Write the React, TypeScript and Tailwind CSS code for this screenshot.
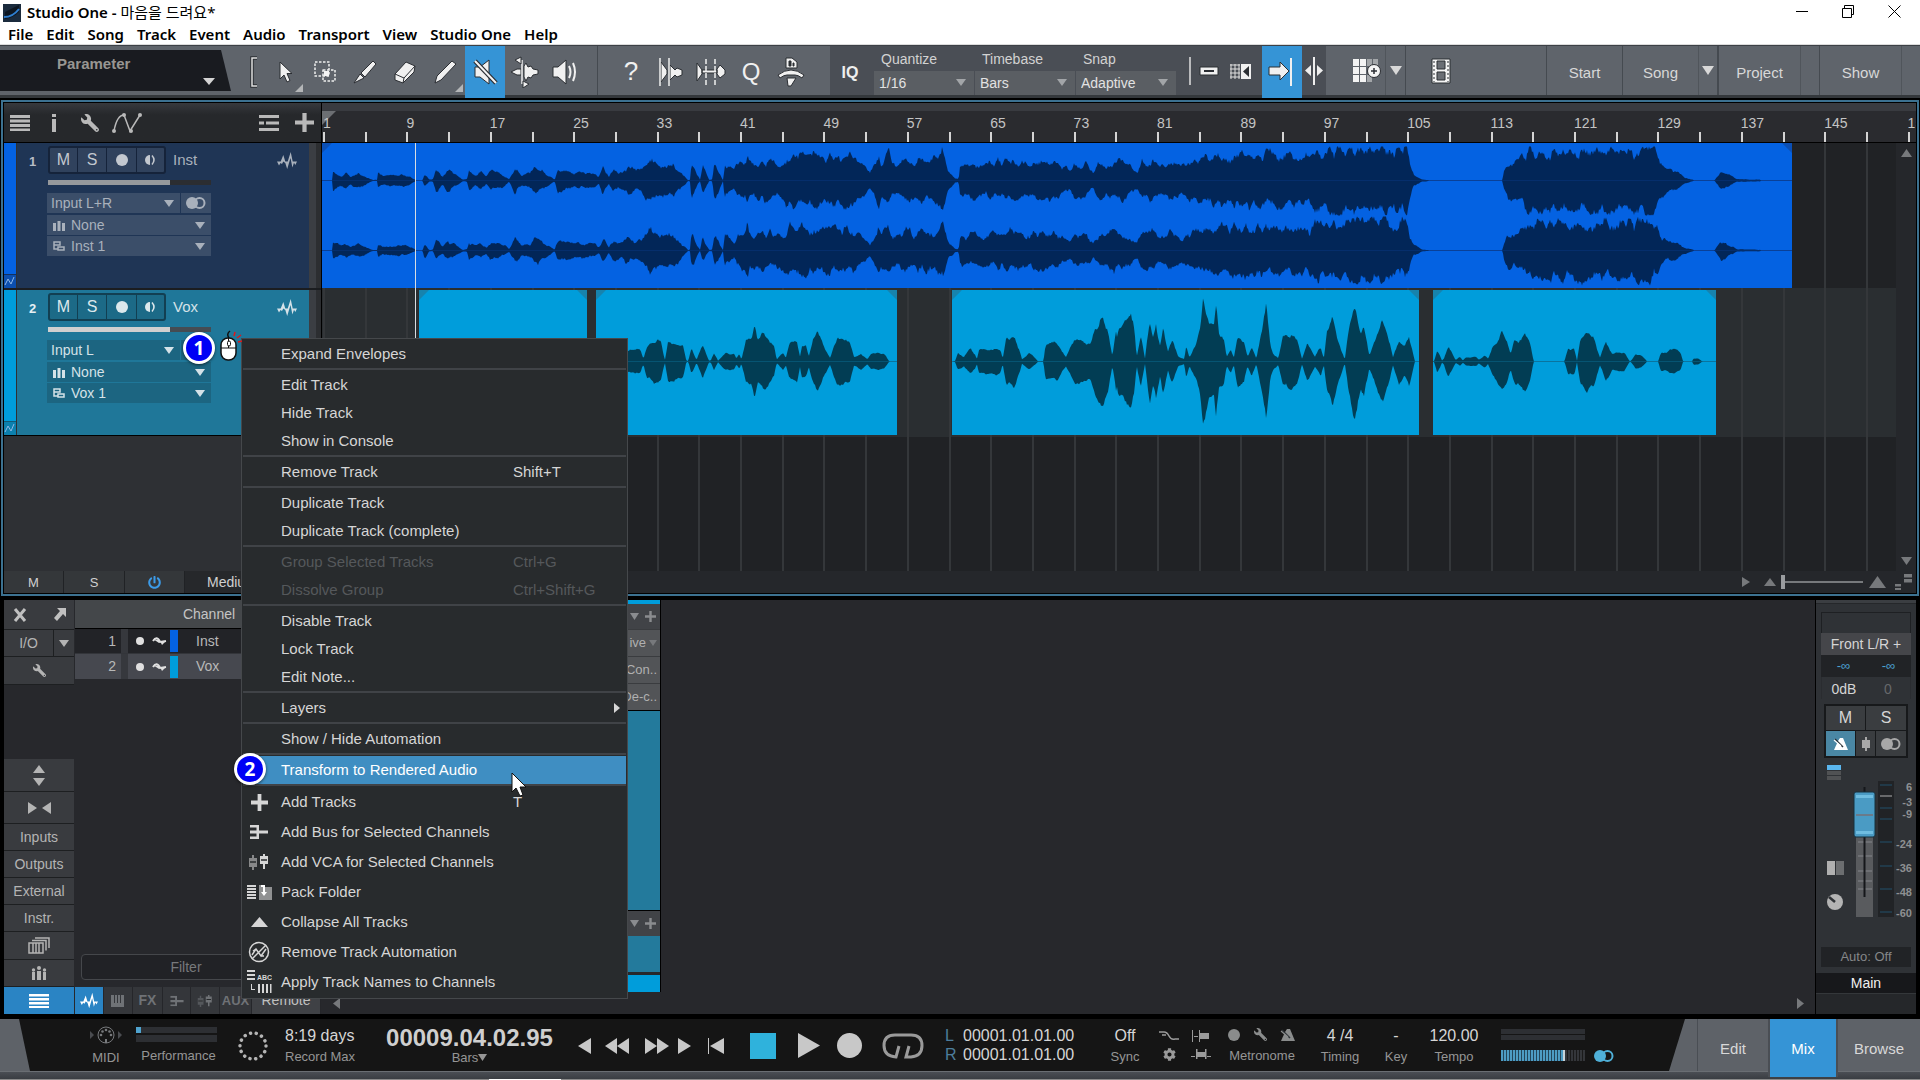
import React from "react";
import { FaWrench, FaCog, FaPowerOff } from "react-icons/fa";

type Pt = [number, number];

/* ---------- waveform data ---------- */

const stretch = (origin: number, unit: number, pts: Pt[]): Pt[] =>
  pts.map(([x, a]) => [x / unit + origin, a / 3]);
const partA = (pts: Pt[]) => stretch(-2, 1.96, pts);
const partB = (pts: Pt[]) => stretch(778, 1.912, pts);

const instEnvelope: Pt[] = [
  ...partA([
    [0, 0], [24, 0], [25, 32], [40, 17], [52, 28], [60, 14], [75, 28], [90, 14], [103, 2], [112, 2], [114, 26], [125, 16], [150, 19],
    [165, 20], [185, 5], [189, 0], [201, 0], [205, 28], [214, 3], [221, 3], [228, 38], [240, 14], [250, 36], [268, 18], [280, 3], [288, 5],
    [292, 30], [305, 16], [315, 30], [326, 12], [335, 32], [360, 20], [371, 5], [382, 46], [395, 16], [410, 26], [425, 46], [445, 20],
    [460, 2], [466, 36], [490, 25], [540, 24], [546, 10], [555, 50], [566, 10], [575, 38], [592, 26], [605, 50], [620, 30], [630, 46],
    [648, 78], [665, 52], [692, 60], [715, 15], [722, 1], [725, 1], [728, 58], [745, 2], [750, 48], [763, 1], [769, 4], [773, 64],
    [790, 2], [793, 62], [812, 32], [818, 60], [834, 64], [838, 98], [842, 60], [850, 56], [870, 68], [900, 56], [920, 84], [953, 86], [990, 80], [1045, 80],
    [1070, 38], [1078, 24], [1090, 60], [1095, 92], [1100, 50], [1115, 96], [1121, 58], [1135, 60], [1150, 76], [1165, 55], [1175, 70], [1205, 76],
    [1220, 106], [1230, 36], [1245, 6], [1252, 6], [1254, 48], [1280, 60], [1300, 52], [1350, 70], [1380, 62], [1440, 60], [1470, 36],
    [1480, 55], [1500, 55], [1515, 28], [1525, 55], [1555, 62],
  ]),
  ...partB([
    [0, 76], [40, 66], [60, 44], [70, 30], [80, 60], [100, 72], [115, 48], [135, 68], [155, 42], [165, 66], [200, 72], [240, 84],
    [290, 92], [330, 88], [400, 78], [415, 104], [450, 100], [520, 104], [587, 104], [592, 52], [600, 22], [615, 4], [627, 2], [628, 0],
    [770, 0], [771, 25], [780, 56], [800, 66], [820, 100], [900, 102], [980, 104], [1060, 102], [1070, 62], [1085, 36], [1100, 32], [1115, 13],
    [1134, 3], [1135, 0], [1175, 0], [1188, 36], [1205, 18], [1218, 4], [1262, 3], [1264, 0], [1323, 0],
  ]),
];

const voxEnvelopes: Pt[][] = [
  [],
  partA([
    [600, 30], [615, 38], [628, 35], [634, 8], [640, 45], [655, 62], [668, 58], [676, 4], [682, 62], [700, 52], [712, 46], [718, 2],
    [722, 2], [728, 38], [738, 5], [750, 48], [762, 3], [766, 3], [772, 28], [780, 2], [795, 26], [812, 22], [816, 8], [822, 22], [826, 6],
    [835, 62], [846, 65], [852, 105], [858, 60], [870, 85], [890, 45], [895, 5], [908, 28], [913, 12], [920, 55], [935, 62], [941, 14],
    [944, 46], [953, 46], [958, 14], [966, 65], [975, 98], [986, 50], [1000, 10], [1005, 35], [1015, 72], [1038, 60], [1047, 12],
    [1060, 24], [1073, 8], [1080, 24], [1105, 24], [1115, 2], [1117, 0], [1130, 0],
  ]),
  partA([
    [1240, 0], [1245, 2], [1250, 26], [1262, 14], [1275, 38], [1285, 20], [1287, 4], [1292, 36], [1310, 36], [1325, 42], [1334, 34], [1338, 8],
    [1345, 68], [1362, 74], [1372, 30], [1376, 6], [1390, 26], [1405, 5], [1406, 1], [1418, 1], [1422, 52], [1445, 56], [1462, 14],
    [1480, 68], [1510, 56], [1520, 95], [1532, 128], [1545, 90], [1553, 14], [1562, 105],
  ]).concat(
    partB([
      [2, 115], [8, 70], [15, 90], [25, 5], [35, 100], [45, 110], [58, 150], [66, 90], [70, 12], [78, 80], [86, 8], [95, 125], [102, 70],
      [107, 118], [115, 45], [121, 100], [130, 28], [138, 60], [150, 15], [161, 8], [165, 50], [171, 12], [185, 60], [192, 100], [197, 182],
      [208, 112], [218, 105], [222, 172], [228, 80], [237, 70], [242, 14], [250, 34], [256, 12], [263, 74], [275, 66], [282, 15], [290, 45], [299, 8],
      [308, 80], [318, 172], [326, 45], [332, 22], [341, 10], [350, 72], [364, 80], [378, 65], [386, 8], [397, 58], [411, 16], [422, 44], [428, 10],
      [434, 90], [444, 135], [453, 75], [468, 6], [475, 90], [487, 175], [498, 80], [505, 105], [515, 20], [528, 70], [540, 130], [555, 50],
      [560, 12], [572, 68], [582, 45], [591, 70], [599, 20], [602, 0], [611, 0],
    ]),
  ),
  partB([
    [636, 0], [639, 2], [645, 36], [654, 3], [658, 10], [666, 48], [680, 4], [688, 14], [694, 4], [700, 13], [720, 13], [724, 5], [735, 18],
    [742, 8], [750, 40], [760, 60], [768, 90], [776, 76], [785, 24], [793, 66], [800, 60], [813, 92], [822, 62], [829, 2], [830, 0],
    [888, 0], [895, 40], [907, 36], [912, 2], [918, 60], [933, 92], [945, 66], [956, 12], [967, 60], [980, 22], [988, 28], [1003, 28],
    [1012, 2], [1014, 0], [1017, 6], [1024, 22], [1036, 18], [1045, 2], [1046, 0], [1067, 0], [1072, 26], [1085, 30], [1098, 38],
    [1110, 26], [1115, 0], [1132, 0], [1135, 10], [1144, 9], [1151, 1], [1153, 0], [1177, 0],
  ]),
];

const noise = (n: number) => {
  const v = Math.sin(n * 127.1 + 11.7) * 43758.5453;
  return v - Math.floor(v);
};

function ampAt(pts: Pt[], x: number) {
  if (!pts.length || x < pts[0][0] || x > pts[pts.length - 1][0]) return 0;
  for (let i = 1; i < pts.length; i++) {
    if (x <= pts[i][0]) {
      const [x0, a0] = pts[i - 1];
      const [x1, a1] = pts[i];
      return x1 === x0 ? a1 : a0 + ((a1 - a0) * (x - x0)) / (x1 - x0);
    }
  }
  return 0;
}

/* Jagged peaks: every few pixels a new spike height, with valleys in between. */
function spike(x: number, seed: number) {
  const cell = Math.floor(x / 4);
  const phase = (x % 4) / 4;
  const a = noise(cell + seed);
  const b = noise(cell + 1 + seed);
  return 0.7 * (a + (b - a) * phase) + 0.3 * noise(x * 1.3 + seed);
}

function wavePath(pts: Pt[], from: number, to: number, cy: number, rough: number, seed: number, gain = 1) {
  const top: string[] = [];
  const bottom: string[] = [];
  for (let x = from; x <= to; x++) {
    const a = ampAt(pts, x) * gain;
    const up = Math.min(34 + 30 * Number(cy > 60 && cy < 80), a * (1 - rough * spike(x, seed)));
    const down = Math.min(35 + 32 * Number(cy > 60 && cy < 80), a * (1 - rough * spike(x, seed + 400)));
    top.push(`${x - from} ${(cy - up).toFixed(1)}`);
    bottom.unshift(`${x - from} ${(cy + down).toFixed(1)}`);
  }
  return `M${top.join("L")}L${bottom.join("L")}Z`;
}

const LANE_W = 1574;
const laneX = (px: number) => `${(px / LANE_W) * 100}%`;
const BAR8 = 83.4;

/* ---------- small shared pieces ---------- */

const Tri = ({ dir = "down", className = "", label }: { dir?: "up" | "down" | "left" | "right"; className?: string; label?: string }) => {
  const pts = { down: "0,0 10,0 5,10", up: "0,10 10,10 5,0", left: "10,0 10,10 0,5", right: "0,0 0,10 10,5" }[dir];
  return (
    <svg viewBox="0 0 10 10" preserveAspectRatio="none" fill="currentColor" className={`shrink-0 ${className}`} aria-label={label}>
      <polygon points={pts} />
    </svg>
  );
};

const Svg = ({ w, h, children, className = "" }: { w: number; h: number; children: React.ReactNode; className?: string }) => (
  <svg width={w} height={h} viewBox={`0 0 ${w} ${h}`} fill="currentColor" className={`shrink-0 ${className}`}>
    {children}
  </svg>
);

const Stereo = ({ className = "" }: { className?: string }) => (
  <Svg w={22} h={14} className={className}>
    <circle cx="7" cy="7" r="6" />
    <circle cx="14.5" cy="7" r="5" fill="none" stroke="currentColor" strokeWidth="2" />
  </Svg>
);

const WaveIcon = ({ className = "" }: { className?: string }) => (
  <Svg w={20} h={17} className={className}>
    <path d="M0 9.500h3.700L6.300 3l2 6.500h2.400L13.700 0l2 9.500H20L18.300 13 17 10.800 15.400 15.500 13.500 6l-3.300 11-1.900-6L6.300 9.600 5 12 3.500 11 2 13.500z" />
  </Svg>
);

const Plus = ({ size = 18, className = "" }: { size?: number; className?: string }) => (
  <svg width={size} height={size} viewBox="0 0 18 18" fill="currentColor" className={`shrink-0 ${className}`}>
    <path d="M7 0h4v7h7v4h-7v7H7v-7H0V7h7z" />
  </svg>
);

const Bus = ({ className = "" }: { className?: string }) => (
  <Svg w={18} h={14} className={className}>
    <path d="M0 0h9v5.500h9v3H9V14H0v-2.500h6.500v-3H0v-3h6.500v-3H0z" />
  </Svg>
);

const Faders = ({ className = "" }: { className?: string }) => (
  <Svg w={20} h={16} className={className}>
    <path d="M3 1h2v3h3v9H5v3H3v-3H0V4h3z" opacity=".55" />
    <path d="M14 0h2v2h3v8h-3v5h-2v-5h-3V2h3z" />
    <path d="M1 8h6M12 6h6" stroke="#282b2d" strokeWidth="1.500" />
  </Svg>
);

const Metro = ({ className = "" }: { className?: string }) => (
  <Svg w={16} h={14} className={className}>
    <path d="M7 1h3l5 12H1l4-9z" />
    <path d="M2 2l8 8" stroke="#2b3035" strokeWidth="1.500" />
    <path d="M1 3l7 6" stroke="currentColor" strokeWidth="1.200" />
  </Svg>
);

const People = ({ className = "" }: { className?: string }) => (
  <Svg w={16} h={14} className={className}>
    <path d="M1 6h3v8H1zM6 5h4v9H6zM12 6h3v8h-3z" />
    <circle cx="2.500" cy="4" r="1.700" />
    <circle cx="8" cy="2" r="2" />
    <circle cx="13.500" cy="4" r="1.700" />
  </Svg>
);

/* ---------- title, menus, tool bar ---------- */

function TitleBar() {
  return (
    <header className="shrink-0 bg-white text-black [font-family:'Noto_Sans','Noto_Sans_CJK_KR',sans-serif]">
      <div className="flex h-[22px] items-center">
        <svg width="18" height="18" viewBox="0 0 18 18" className="ml-[3px] mt-1">
          <rect width="18" height="18" fill="#1b2b3d" />
          <path d="M2 8q8-4 14-7v7q-6 6-14 7z" fill="#0e1722" />
          <path d="M1 13q9 0 15-8" stroke="#2f7fd0" strokeWidth="2" fill="none" />
        </svg>
        <span className="ml-[6px] mt-px text-[15px] leading-5 font-semibold">
          Studio One - <span className="font-normal">마음을 드려요*</span>
        </span>
        <div className="ml-auto flex items-center">
          <button aria-label="Minimize" className="flex w-[46px] justify-center">
            <Svg w={12} h={12}><rect y="6" width="12" height="1" /></Svg>
          </button>
          <button aria-label="Restore" className="flex w-[46px] justify-center">
            <svg width="13" height="13" viewBox="0 0 13 13" fill="none" stroke="black">
              <path d="M.5 3.500h9v9h-9zM2.500 3.500v-3h9v9h-2" />
            </svg>
          </button>
          <button aria-label="Close" className="mr-[3px] flex w-[46px] justify-center">
            <svg width="13" height="13" viewBox="0 0 13 13" stroke="black"><path d="M.5.5l12 12M12.500.5l-12 12" /></svg>
          </button>
        </div>
      </div>
      <nav className="flex h-[23px] items-center gap-[13px] border-b border-[#dcdcdc] pt-[2px] pl-2 text-[15px] leading-5 font-semibold">
        {["File", "Edit", "Song", "Track", "Event", "Audio", "Transport", "View", "Studio One", "Help"].map((m) => (
          <button key={m}>{m}</button>
        ))}
      </nav>
    </header>
  );
}

const toolIcons: Record<string, React.ReactNode> = {
  Arrow: <path d="M11 6v17l4-4 3 7 3-1.500-3-7h5z" />,
  Range: (
    <g fill="none" stroke="#f0f0f0" strokeWidth="1.500" strokeDasharray="2.500 1.500">
      <path d="M6 6h14v14H6zM14 14h12v11H14z" />
      <path d="M15 15h5v5h-5z" fill="#f4f4f4" stroke="none" />
    </g>
  ),
  Split: <path d="M5 27l6-9 4 4zM12 17L24 5l3 3-11 13z" />,
  Eraser: (
    <>
      <path d="M6 18L17 6l9 4-1 6-11 11-8-3z" />
      <path d="M6 18l9 4 11-12M15 22l-1 5" fill="none" />
    </>
  ),
  Paint: <path d="M6 27l2-7L23 5l4 3-15 16z" />,
  Mute: (
    <>
      <path d="M6 11h5l9-7v24l-9-7H6z" />
      <path d="M6 5l21 22" stroke="#2b2e33" strokeWidth="4.500" />
      <path d="M6 5l21 22" stroke="#f4f4f4" strokeWidth="2" />
    </>
  ),
  Bend: (
    <>
      <path d="M2 16l6-3h4v6H8zM15 10l2-3 2 4 3-1 2 3 5 1v4l-5 1-2 3-3-1-2 4-2-4z" />
      <path d="M13 4v24" stroke="#f0f0f0" strokeWidth="1.500" />
      <path d="M6 4l6-3v7zM20 28l-6-3v7z" />
    </>
  ),
  Listen: (
    <>
      <path d="M4 11h5l8-7v24l-8-7H4z" />
      <path d="M20 10q3 6 0 12M24 7q4 9 0 18" fill="none" stroke="#f0f0f0" strokeWidth="2" />
    </>
  ),
};

const extraIcons: Record<string, React.ReactNode> = {
  Transients: (
    <>
      <path d="M6 6l6 8v4l-6 8zM15 9l5 5 2-2 5 2v5l-5 2-2-2-5 5z" />
      <path d="M5 2v28M14 2v28" stroke="#f0f0f0" strokeWidth="1.500" />
    </>
  ),
  Loop: (
    <>
      <path d="M2 7l5 7v4l-5 7zM7 14h15v3H7zM22 13l3-4 5 5v4l-5 4-3-4z" />
      <path d="M11 3v26M20 3v26" stroke="#f0f0f0" strokeWidth="1.500" strokeDasharray="5 2" />
    </>
  ),
};

const ToolGlyph = ({ children }: { children: React.ReactNode }) => (
  <svg width="32" height="32" viewBox="0 0 32 32" fill="#f0f0f0" stroke="#2b2e33" strokeWidth="1" strokeLinejoin="round" className="mt-[2px]">
    {children}
  </svg>
);

function ToolSelect({ label, value }: { label: string; value: string }) {
  return (
    <div className="flex w-[101px] flex-col">
      <label htmlFor={label} className="h-[25px] pl-[7px] text-[14px] leading-[27px] text-[#d2d2d2]">{label}</label>
      <div className="relative mr-px">
        <select id={label} defaultValue={value} className="h-6 w-full appearance-none bg-[#5a5e63] pl-[5px] text-[14px] leading-6 text-[#e2e2e2]">
          <option>{value}</option>
        </select>
        <Tri className="pointer-events-none absolute top-2 right-2 h-[7px] w-[10px] text-[#a2a5a8]" />
      </div>
    </div>
  );
}

function ToolBar() {
  return (
    <div className="flex h-[53px] shrink-0 border-t border-b-[3px] border-t-[#3c4046] border-b-[#34383c] bg-[#5f646b] text-[15px] text-[#d8d8d8]">
      <div className="flex w-[232px] shrink-0 flex-col bg-[#191b20] [clip-path:polygon(0_4px,221px_4px,231px_45px,0_45px)]">
        <span className="mt-[10px] pl-[57px] text-[15px] leading-4 font-bold text-[#989692]">Parameter</span>
        <Tri className="mt-[6px] ml-[203px] h-[7px] w-3 text-[#d4d4d4]" />
      </div>
      <Svg w={33} h={49}>
        <path d="M25 12h-5v28h5" fill="none" stroke="#2b2e33" strokeWidth="3.500" />
        <path d="M25 12h-5v28h5" fill="none" stroke="#e0e0e0" strokeWidth="1.500" />
      </Svg>
      {Object.keys(toolIcons).map((k) => (
        <button key={k} aria-label={k} className={`relative flex w-10 shrink-0 items-center justify-center ${k === "Mute" ? "-mb-[3px] bg-[#3594d6] pb-[3px]" : ""}`}>
          <ToolGlyph>{toolIcons[k]}</ToolGlyph>
          {(k === "Arrow" || k === "Paint") && (
            <svg width="8" height="8" className="absolute right-[2px] bottom-[3px]"><path d="M8 0v8H0z" fill="#b4b6b8" /></svg>
          )}
        </button>
      ))}
      <div className="ml-3 w-px bg-[#454a50]" />
      <div className="flex w-[232px] shrink-0 items-center pl-[13px]">
        <button className="w-10 pt-[2px] text-[26px] text-[#f0f0f0]">?</button>
        {Object.keys(extraIcons).map((k) => (
          <button key={k} aria-label={k} className="flex w-10 justify-center"><ToolGlyph>{extraIcons[k]}</ToolGlyph></button>
        ))}
        <button className="w-10 pt-[2px] text-[24px] text-[#f0f0f0]">Q</button>
        <button aria-label="Quantize panel" className="flex w-10 justify-center">
          <ToolGlyph>
            <path d="M11 2h6l5 4v6H11zM3 19q13-10 26 0l-2 3q-4-3-7-3h-8q-3 0-7 3zM12 22h9l-5 8h-3z" />
            <path d="M14 5v5h2V5zM18 7v3h1V7z" fill="#2b2e33" />
          </ToolGlyph>
        </button>
      </div>
      <div className="flex w-[496px] shrink-0 bg-[#4a4e55]">
        <button className="w-[44px] pt-1 pr-1 text-[16px] font-bold text-[#eee]">IQ</button>
        <ToolSelect label="Quantize" value="1/16" />
        <ToolSelect label="Timebase" value="Bars" />
        <ToolSelect label="Snap" value="Adaptive" />
        <Svg w={85} h={49}>
          <path d="M13 11v28" stroke="#e0e0e0" strokeWidth="1.500" />
          <path d="M23 21h18v8H23z" fill="#f0f0f0" stroke="#2b2e33" />
          <path d="M27 24h10v2H27z" fill="#2b2e33" />
          <path d="M53 19h10M53 23h10M53 27h10M53 31h10M54 18v15M58 18v15M62 18v15" stroke="#e0e0e0" />
          <path d="M64 18h10v15H64z" fill="#f0f0f0" />
          <path d="M72 20v11l-6-5.500z" fill="#2b2e33" />
        </Svg>
        <button aria-label="Snap to end" className="-mb-[3px] flex w-10 items-center justify-center bg-[#3594d6] pb-[3px]">
          <ToolGlyph>
            <path d="M3 11h11V6l9 9-9 9v-5H3z" />
            <path d="M25 2v28" stroke="#f0f0f0" strokeWidth="2" />
          </ToolGlyph>
        </button>
        <Svg w={24} h={49} className="text-[#eee]">
          <path d="M12 11v28" stroke="currentColor" strokeWidth="2" />
          <path d="M9 19v11l-6-5.500zM15 19v11l6-5.500z" />
        </Svg>
      </div>
      <button aria-label="Grid" className="flex w-[60px] items-center border-r border-[#50555b] pl-[26px]">
        <Svg w={30} h={26}>
          <path d="M1 1h6v7H1zM8 1h6v7H8zM1 9h6v7H1zM8 9h6v7H8zM1 17h6v7H1zM8 17h6v7H8z" fill="#f4f4f4" />
          <path d="M15 1h5v7h-5zM21 1h5v7h-5zM15 17h5v7h-5z" fill="#a3a6a9" />
          <circle cx="22" cy="13" r="6.500" fill="#f4f4f4" stroke="#2b2e33" />
          <path d="M22 10v6M19 13h6" stroke="#2b2e33" strokeWidth="1.500" />
        </Svg>
      </button>
      <button aria-label="Grid options" className="flex w-5 items-center justify-center border-r border-[#454a50]"><Tri className="h-[9px] w-3" /></button>
      <div className="flex flex-1 items-center border-r border-[#454a50] pl-[25px]">
        <button aria-label="Video">
          <Svg w={20} h={26}>
            <path d="M1 1h18v24H1z" fill="#f4f4f4" stroke="#2b2e33" />
            <path d="M6 3h8v8H6zM6 14h8v8H6z" fill="#6a6e74" stroke="#2b2e33" />
            <path d="M3 3v21M17 3v21" stroke="#2b2e33" strokeDasharray="2 2" />
          </Svg>
        </button>
      </div>
      <button className="w-[76px] border-r border-[#454a50] pt-[5px]">Start</button>
      <button className="w-[76px] border-r border-[#50555b] pt-[5px]">Song</button>
      <button aria-label="Songs" className="flex w-5 items-center justify-center border-r-2 border-[#454a50]"><Tri className="h-[9px] w-3" /></button>
      <button className="w-[82px] border-r border-[#50555b] pt-[5px]">Project</button>
      <div className="w-[19px] border-r border-[#454a50]" />
      <button className="w-[82px] border-r border-[#50555b] pt-[5px]">Show</button>
      <div className="w-[18px]" />
    </div>
  );
}

/* ---------- arranger ---------- */

function TrackSelect({ id, value, icon, className, dark }: { id: string; value: string; icon?: React.ReactNode; className: string; dark: boolean }) {
  return (
    <div className={`relative flex h-5 items-center ${dark ? "bg-[#3b4e69] text-[#a9b1bc]" : "bg-[#1c6581] text-[#d5e2e8]"} ${className}`}>
      {icon && <span className="pointer-events-none absolute left-[6px]">{icon}</span>}
      <select id={id} aria-label={id} defaultValue={value} className={`h-5 w-full appearance-none bg-transparent text-[14px] leading-5 ${icon ? "pl-6" : "pl-1"}`}>
        <option>{value}</option>
      </select>
      <Tri className="pointer-events-none absolute right-[6px] h-[7px] w-[10px]" />
    </div>
  );
}

function TrackHeader({ n, name, input, out, dark }: { n: number; name: string; input: string; out: string; dark: boolean }) {
  const btn = dark ? "border-[#15233a]" : "border-[#123f52]";
  const miniOut = <Svg w={12} h={11}><path d="M1 1h6v3H1zM5 6h6v3H5zM1 4v4h4" fill="none" stroke="currentColor" strokeWidth="1.500" /></Svg>;
  return (
    <div className="flex h-[145px] shrink-0">
      <div className={`flex w-3 flex-col justify-end ${dark ? "bg-[#0462e2]" : "bg-[#009ddb]"}`}>
        <div className={`h-[14px] border-t ${dark ? "border-[#12315f] bg-[#0c4fae]" : "border-[#125a78] bg-[#0c80ae]"}`}>
          <svg width="12" height="13" viewBox="0 0 12 13" fill="none" stroke="#8fb8e8"><path d="M1 10l3-6 3 5 3-7" /></svg>
        </div>
      </div>
      <div className={`ml-px flex flex-1 ${dark ? "bg-[#1f3555]" : "bg-[#1f7799]"}`}>
        <span className={`mt-[11px] w-[31px] pl-3 text-[13px] leading-4 font-bold ${dark ? "text-[#b6bcc5]" : "text-[#e6f0f4]"}`}>{n}</span>
        <div className="flex flex-1 flex-col">
          <div className="mt-[3px] flex items-center">
            <div className={`flex h-7 w-[118px] rounded-[3px] border-2 ${btn} ${dark ? "bg-[#30425d] text-[#c3c8cf]" : "bg-[#1c6a87] text-[#dce8ec]"}`}>
              <button className={`w-7 border-r text-[16px] leading-5 ${btn}`}>M</button>
              <button className={`w-[29px] border-r text-[16px] leading-5 ${btn}`}>S</button>
              <button aria-label="Record" className={`flex w-[30px] items-center justify-center border-r ${btn}`}><Svg w={12} h={12}><circle cx="6" cy="6" r="6" /></Svg></button>
              <button aria-label="Monitor" className="flex flex-1 items-center justify-center">
                <Svg w={12} h={12}><path d="M5 1v10a5 5 0 010-10z" /><path d="M7 1.500q4 4.500 0 9" fill="none" stroke="currentColor" strokeWidth="1.500" /></Svg>
              </button>
            </div>
            <span className={`ml-[7px] flex-1 pt-px text-[15px] ${dark ? "text-[#a9b1bc]" : "text-[#d5e2e8]"}`}>{name}</span>
            <WaveIcon className={`mr-3 ${dark ? "text-[#a9b1bc]" : "text-[#d5e2e8]"}`} />
          </div>
          <div className={`mt-[6px] flex h-[5px] w-[163px] ${dark ? "bg-[#2b2d31]" : "bg-[#454c53]"}`}>
            <div className={`w-3/4 ${dark ? "bg-[#96999c]" : "bg-[#d0d0d0]"}`} />
          </div>
          <div className="mt-2 -ml-px flex w-[164px] gap-px">
            <TrackSelect id={`${name} input`} value={input} className="flex-1" dark={dark} />
            <button aria-label="Stereo" className={`flex w-[30px] items-center justify-center ${dark ? "bg-[#3b4e69] text-[#a9b1bc]" : "bg-[#1c6581] text-[#d5e2e8]"}`}>
              <Stereo />
            </button>
          </div>
          <TrackSelect id={`${name} instrument`} value="None" icon={<Svg w={12} h={11}><path d="M0 3h3v8H0zM4.500 1h3v10h-3zM9 3h3v8H9z" /></Svg>} className="mt-[2px] -ml-px w-[164px]" dark={dark} />
          <TrackSelect id={`${name} channel`} value={out} icon={miniOut} className="mt-px -ml-px w-[164px]" dark={dark} />
        </div>
      </div>
      <div className="w-[7px] bg-[#3b3e43]" />
      <div className="w-[5px] bg-[#2c2e31]" />
    </div>
  );
}

function Clip({ from, to, tone, children, label }: { from: number; to: number; tone: "inst" | "vox"; children?: React.ReactNode; label: string }) {
  const corner = tone === "inst" ? "#0b4fb5" : "#1783ad";
  return (
    <div
      role="img"
      aria-label={label}
      className={`absolute inset-y-0 ${tone === "inst" ? "bg-[#0462e2]" : "bg-[#009ddb]"}`}
      style={{ left: laneX(from), width: laneX(to - from) }}
    >
      <svg viewBox={`0 0 ${to - from} 145`} preserveAspectRatio="none" className="block h-full w-full">
        {children}
        <path d={`M0 0h10L0 10zM${to - from} 0h-10l10 10z`} fill={corner} />
      </svg>
    </div>
  );
}

function GridLines() {
  return (
    <div className="absolute inset-0">
      {Array.from({ length: 38 }, (_, i) => (
        <div key={i} className="absolute inset-y-0 w-[2px] bg-[#34373a]" style={{ left: laneX(1 + (i * BAR8) / 2) }} />
      ))}
    </div>
  );
}

const voxClips: Pt[] = [[97, 265], [274, 575], [630, 1097], [1111, 1394]];

function Arranger() {
  return (
    <section className="mx-px flex h-[496px] shrink-0 border-2 border-[#3c7190]">
      <div className="flex min-w-0 flex-1 border border-black bg-black">
        <div className="mr-px flex w-[317px] shrink-0 flex-col bg-[#2e3034]">
          <div className="flex h-10 shrink-0 items-center border-b border-black bg-linear-to-b from-[#37393d] to-[#26282b] to-30% pl-[6px] text-[#b9b9b9]">
            <Svg w={20} h={16}><path d="M0 0h20v3H0zM0 4.500h20v3H0zM0 9h20v3H0zM0 13.500h20v2.500H0z" /></Svg>
            <Svg w={6} h={18} className="ml-[21px]"><path d="M1 0h4v3H1zM1 5h4v13H1z" /></Svg>
            <FaWrench size={18} className="ml-6 -scale-x-100" />
            <svg width="30" height="20" viewBox="0 0 30 20" className="ml-[13px]" fill="none" stroke="currentColor" strokeWidth="1.500">
              <path d="M2 18Q5 2 12 2l6 16L28 2" />
              <g fill="currentColor" stroke="none"><circle cx="2" cy="18" r="2" /><circle cx="12" cy="2" r="2" /><circle cx="19" cy="18" r="2" /><circle cx="28" cy="2" r="2" /></g>
            </svg>
            <Svg w={20} h={16} className="ml-auto"><path d="M0 0h20v3H0zM0 6.500h5v3H0zM7 6.500h13v3H7zM0 13h20v3H0z" /></Svg>
            <Plus size={19} className="mr-[7px] ml-4" />
          </div>
          <TrackHeader n={1} name="Inst" input="Input L+R" out="Inst 1" dark />
          <div className="h-[2px] shrink-0 bg-[#1b1d20]" />
          <TrackHeader n={2} name="Vox" input="Input L" out="Vox 1" dark={false} />
          <div className="flex-1 border-t border-black" />
          <div className="flex h-[22px] text-[14px] text-[#d0d0d0] [&>*]:border-r [&>*]:border-[#202225] [&>*]:pt-px">
            <button className="w-[60px] bg-[#34373a] text-[13px]">M</button>
            <button className="w-[61px] bg-[#34373a] text-[13px]">S</button>
            <button aria-label="Power" className="flex w-[60px] items-center justify-center bg-[#34373a] text-[#3c9be8]"><FaPowerOff size={13} /></button>
            <button className="flex-1 bg-[#26282b] pl-[22px] text-left">Medium</button>
          </div>
        </div>

        <div className="flex min-w-0 flex-1 flex-col bg-[#202225]">
          <div className="relative h-10 shrink-0 overflow-hidden border-b border-black bg-[#2a2b2f]">
            <div className="h-2 bg-[#393b40]" />
            <svg width="14" height="14" className="absolute top-2 left-0"><path d="M0 0h14L0 14z" fill="#6c6f73" /></svg>
            {Array.from({ length: 20 }, (_, i) => (
              <div key={i} className="absolute top-[11px] h-7" style={{ left: `${((1 + i * BAR8) / 1594) * 100}%`, width: `${(BAR8 / 1594) * 100}%` }}>
                <span className="block text-[14px] leading-[18px] text-[#c4c4c4]">{1 + i * 8}</span>
                <div className="flex h-[10px]">
                  <div className="flex-1 border-l-2 border-[#d4d4d4]" />
                  <div className="flex-1 border-l-2 border-[#d4d4d4]" />
                </div>
              </div>
            ))}
          </div>
          <div className="flex min-h-0 flex-1">
            <div className="relative flex min-w-0 flex-1 flex-col overflow-hidden">
              <GridLines />
              <div className="relative h-[145px] shrink-0">
                <Clip from={0} to={1470} tone="inst" label="Inst audio">
                  <path d="M0 37.500h1470M0 107.500h1470" stroke="#0a45a0" />
                  <path d={wavePath(instEnvelope, 0, 1470, 37.5, 0.52, 3, 1.14)} fill="#022658" />
                  <path d={wavePath(instEnvelope, 0, 1470, 107.5, 0.55, 77, 1.08)} fill="#022658" />
                  <path d="M0 37.500h1470M0 107.500h1470" stroke="#0a3b8a" opacity=".4" />
                </Clip>
              </div>
              <div className="relative h-[149px] shrink-0 bg-[#2a2e31] py-[2px]">
                <GridLines />
                <div className="relative h-full">
                  {voxClips.map(([a, b], i) => (
                    <Clip key={a} from={a} to={b} tone="vox" label={`Vox audio ${i + 1}`}>
                      <path d={`M0 71.500h${b - a}`} stroke="#0a7fae" />
                      {i > 0 && <path d={wavePath(voxEnvelopes[i], a, b, 71.5, 0.26, i * 31, 1.13)} fill="#023d54" />}
                      <path d={`M0 71.500h${b - a}`} stroke="#0a6b90" opacity=".5" />
                    </Clip>
                  ))}
                </div>
              </div>
              <div className="absolute inset-y-0 w-px bg-[#d8dde2]" style={{ left: laneX(93) }} />
            </div>
            <div className="flex w-5 flex-col items-center justify-between bg-[#25272b] py-[6px] text-[#77797c]">
              <Tri dir="up" className="h-2 w-[11px]" />
              <Tri className="h-2 w-[11px]" />
            </div>
          </div>
          <div className="flex h-[22px] shrink-0 items-center justify-end bg-[#25272b] pr-[3px] text-[#77797c]">
            <Tri dir="right" className="h-[10px] w-2" />
            <Tri dir="up" className="ml-[14px] h-2 w-3" />
            <input type="range" aria-label="Zoom" defaultValue={0} className="ml-[5px] h-[14px] w-[82px] appearance-none bg-[linear-gradient(#77797c,#77797c)] bg-[length:100%_2px] bg-center bg-no-repeat [&::-webkit-slider-thumb]:h-[14px] [&::-webkit-slider-thumb]:w-1 [&::-webkit-slider-thumb]:appearance-none [&::-webkit-slider-thumb]:bg-[#9a9c9f]" />
            <Tri dir="up" className="ml-[6px] h-3 w-[17px]" />
            <Svg w={18} h={16} className="ml-[9px]"><path d="M0 10h6v2.500H0zM0 14h6v2H0zM9 0h8v3.500H9zM9 5h8v3.500H9z" /></Svg>
          </div>
        </div>
      </div>
    </section>
  );
}

/* ---------- console ---------- */

const sideBtn = "flex shrink-0 items-center justify-center border-b border-[#1d1f21] bg-[#393b3f] text-[14px] text-[#b4b4b4]";

function ChannelRow({ n, name, on }: { n: number; name: string; on?: boolean }) {
  return (
    <li className={`flex h-[25px] items-center text-[14px] text-[#b8b8b8] ${on ? "bg-[#46484f]" : "border-b border-[#33353a] bg-[#222327]"}`}>
      <span className="w-[41px] text-right">{n}</span>
      <span className="mx-[5px] h-full w-[7px] bg-[#36383d]" />
      <Svg w={34} h={12} className="ml-[3px] text-[#e0e0e0]">
        <circle cx="4" cy="6" r="4" />
        <path d="M17 6q4-6 7 1l6-1" fill="none" stroke="currentColor" strokeWidth="2" />
        <path d="M17 4l6 1v3zM24 6l6 0-4 4z" />
      </Svg>
      <span className={`h-[22px] w-2 ${on ? "bg-[#009ddb]" : "bg-[#0462e2]"}`} />
      <span className="ml-[18px]">{name}</span>
    </li>
  );
}

const dbMarks: [string, string][] = [["6", "h-[15px]"], ["-3", "h-3"], ["-9", "h-[30px]"], ["-24", "h-6"], ["-36", "h-6"], ["-48", "h-[21px]"], ["-60", "h-4"]];

function MainStrip() {
  return (
    <aside className="flex w-[101px] shrink-0 flex-col border-l border-black bg-[#2f3236] text-[14px] text-[#d5d5d5]">
      <div className="h-1 border-b border-[#25272a] bg-[#3b3e42]" />
      <div className="mx-[5px] mt-2 h-[21px] border border-b-0 border-[#1e2023]" />
      <button className="mx-[5px] h-[22px] bg-[#45464a] text-[14px] leading-[22px]">Front L/R +</button>
      <div className="mx-[5px] grid h-[22px] grid-cols-2 bg-[#212326] text-center text-[13px] leading-[22px] text-[#4a9fcf]">
        <span>-∞</span>
        <span>-∞</span>
      </div>
      <div className="mx-[5px] grid h-[22px] grid-cols-2 border-x border-[#2a2c30] text-center leading-6">
        <span>0dB</span>
        <span className="text-[#66686b]">0</span>
      </div>
      <div className="mx-2 mt-[5px] grid grid-cols-2 border-2 border-b-0 border-[#17191b] text-[16px]">
        <button className="h-6 border-r border-[#17191b] bg-[#3a3d40]">M</button>
        <button className="h-6 bg-[#3a3d40]">S</button>
      </div>
      <div className="mx-2 flex h-[28px] border-2 border-t border-[#17191b] text-[#a8a8a8]">
        <button aria-label="Metronome" className="flex flex-[31] items-center justify-center bg-[#4a87a4] text-white"><Metro /></button>
        <button aria-label="Fader" className="flex flex-[20] items-center justify-center border-x border-[#17191b] bg-[#3a3d40]">
          <Svg w={8} h={14}><path d="M3 0h2v3h3v8H5v3H3v-3H0V3h3z" /></Svg>
        </button>
        <button aria-label="Stereo" className="flex flex-[32] items-center justify-center bg-[#3a3d40]"><Stereo /></button>
      </div>
      <div className="mt-[23px] flex flex-1">
        <div className="flex w-9 flex-col pl-[11px]">
          <div className="mt-[-16px] h-[5px] w-[14px] bg-[#5ab6ee]" />
          <div className="mt-px h-1 w-[14px] bg-[#505254]" />
          <div className="mt-px h-1 w-[14px] bg-[#505254]" />
          <div className="mt-[81px] flex h-[14px] w-[17px] gap-px"><i className="flex-1 bg-[#b0b0b0]" /><i className="flex-1 bg-[#6c6e70]" /></div>
          <Svg w={16} h={16} className="mt-[19px] text-[#b4b4b4]"><circle cx="8" cy="8" r="8" /><path d="M8 8L2 3" stroke="#2f3236" strokeWidth="2.500" /></Svg>
        </div>
        <Svg w={26} h={142}>
          <path d="M6 50h17v86H6z" fill="#595b5e" />
          <path d="M8 61h14M8 75h14M8 90h14M8 100h14M8 108h14" stroke="#84868a" />
          <path d="M14.500 6v110" stroke="#15171a" strokeWidth="2" />
          <rect x="4" y="11" width="21" height="45" rx="2" fill="#4a9bc4" stroke="#17303d" />
          <path d="M6 14h17v3H6zM6 50h17v3H6z" fill="#6fbde0" />
          <path d="M6 34h17" stroke="#8a5a50" />
        </Svg>
        <Svg w={18} h={142} className="ml-[2px]">
          <path d="M0 0h16v136H0z" fill="#212326" />
          <path d="M2 4h12M2 27h12M2 38h12M2 61h12M2 85h12M2 108h12M2 131h12" stroke="#23506b" />
          <path d="M2 15h12" stroke="#b0b0b0" />
        </Svg>
        <div className="flex flex-1 flex-col pr-1 text-right text-[11px] leading-3 font-bold text-[#8e9092]">
          {dbMarks.map(([t, h]) => <span key={t} className={h}>{t}</span>)}
        </div>
      </div>
      <button className="mx-[5px] mb-[6px] h-5 bg-[#212326] text-[13px] leading-5 text-[#85878a]">Auto: Off</button>
      <div className="h-5 bg-[#17181b] text-center leading-5 text-[#f0f0f0]">Main</div>
      <div className="h-[21px] border-t border-[#34373a] bg-[#25272a]" />
    </aside>
  );
}

function Console() {
  return (
    <section className="mx-[3px] mt-[3px] flex min-h-0 flex-1 border border-black bg-[#27282c]">
      <div className="mr-px flex w-[70px] shrink-0 flex-col">
        <div className={`${sideBtn} h-[30px] gap-[26px]`}>
          <button aria-label="Close console"><Svg w={14} h={14} className="mt-px text-[#c0c0c0]"><path d="M2 1l10 12M12 1L2 13" stroke="currentColor" strokeWidth="3" /></Svg></button>
          <button aria-label="Detach"><Svg w={13} h={13} className="text-[#c0c0c0]"><path d="M4 0h9v9l-3-3-6 7-3-3 6-7z" /></Svg></button>
        </div>
        <div className={`${sideBtn} h-[27px]`}>
          <button className="flex-1">I/O</button>
          <button aria-label="I/O options" className="flex h-full w-[21px] items-center justify-center border-l border-[#1d1f21]"><Tri className="h-[7px] w-[10px]" /></button>
        </div>
        <button aria-label="Options" className={`${sideBtn} h-[28px]`}><FaWrench size={13} className="-scale-x-100" /></button>
        <div className="flex-1 bg-[#27282c]" />
        <button aria-label="Expand height" className={`${sideBtn} h-[33px] flex-col gap-[5px]`}><Tri dir="up" className="h-2 w-3" /><Tri className="h-2 w-3" /></button>
        <button aria-label="Narrow" className={`${sideBtn} h-8 gap-[5px]`}><Tri dir="right" className="h-3 w-[9px]" /><Tri dir="left" className="h-3 w-[9px]" /></button>
        {["Inputs", "Outputs", "External", "Instr."].map((t) => <button key={t} className={`${sideBtn} h-[27px]`}>{t}</button>)}
        <button aria-label="Banks" className={`${sideBtn} h-[28px]`}>
          <svg width="22" height="17" viewBox="0 0 22 17" fill="none" stroke="currentColor" strokeWidth="1.500"><path d="M1 6h14v10H1zM5 6v10M8 6v10M11 6v10M4 3.500h14v10M7 1h14v10" /></svg>
        </button>
        <button aria-label="Groups" className={`${sideBtn} h-[27px]`}><People /></button>
        <button aria-label="Channel list" className="flex h-[27px] shrink-0 items-center justify-center bg-[#2a84c4] text-white">
          <Svg w={20} h={14}><path d="M0 0h20v2.500H0zM0 4h20v2.500H0zM0 8h20v2.500H0zM0 12h20v2H0z" /></Svg>
        </button>
      </div>
      <div className="flex w-[246px] shrink-0 flex-col">
        <div className="h-[29px] border-b border-black bg-[#44474a] pl-[22px] text-center text-[14px] leading-[29px] text-[#c4c4c4]">Channel</div>
        <ul>
          <ChannelRow n={1} name="Inst" />
          <ChannelRow n={2} name="Vox" on />
        </ul>
        <input aria-label="Filter" placeholder="Filter" className="mx-[6px] mt-auto mb-[7px] h-[26px] w-[210px] rounded border border-[#45474b] bg-[#212226] text-center text-[14px] placeholder:text-[#77797c]" />
        <div className="flex h-[27px] text-[14px] font-bold text-[#6f7276] [&>*]:flex [&>*]:shrink-0 [&>*]:items-center [&>*]:justify-center [&>*]:border-r [&>*]:border-[#25262a]">
          <button aria-label="Audio" className="w-[29px] bg-[#2a84c4] text-white"><WaveIcon className="scale-90" /></button>
          <button aria-label="Instruments" className="w-[29px] bg-[#34363a]"><Svg w={14} h={12}><path d="M0 0h3v8h1V0h2v8h1V0h2v8h1V0h3v12H0z" /></Svg></button>
          <button className="w-[30px] bg-[#34363a]">FX</button>
          <button aria-label="Bus" className="w-[28px] bg-[#34363a]"><Bus className="scale-75" /></button>
          <button aria-label="VCA" className="w-[29px] bg-[#34363a]"><Faders className="scale-75" /></button>
          <button className="w-[32px] bg-[#34363a] text-[13px]">AUX</button>
          <button className="flex-1 bg-[#3f4145] font-normal text-[#c0c0c0]">Remote</button>
        </div>
      </div>
      <div className="ml-px flex min-w-0 flex-1 flex-col bg-[#27282c]">
        <div className="flex min-h-0 flex-1 pl-[299px]">
          <div className="flex w-10 flex-col border-r border-black text-[13px] text-[#b0b0b0]">
            <div className="h-1 bg-[#009ddb]" />
            <div className="flex h-[25px] items-center justify-end gap-[6px] bg-[#414347] pr-1 text-[#8a8c8f]"><Tri className="h-[7px] w-[9px]" /><Plus size={11} /></div>
            {["ive", "Con..", "De-c.."].map((t) => (
              <div key={t} className="flex h-[27px] shrink-0 items-center justify-end gap-[3px] overflow-hidden border-t border-[#3a3c3f] bg-[#525457] pr-[3px]">
                {t}
                {t === "ive" && <Tri className="h-[6px] w-[8px] text-[#77797c]" />}
              </div>
            ))}
            <div className="flex-1 border-t border-black bg-[#237a9c]" />
            <div className="flex h-[26px] items-center justify-end gap-[6px] border-t border-black bg-[#414347] pr-1 text-[#8a8c8f]"><Tri className="h-[7px] w-[9px]" /><Plus size={11} /></div>
            <div className="h-9 bg-[#237a9c]" />
            <div className="mt-[3px] h-[17px] bg-[#009ddb]" />
          </div>
        </div>
        <div className="flex h-[22px] items-center justify-between pr-[11px] pl-[11px] text-[#77797c]">
          <Tri dir="left" className="h-[11px] w-[7px]" />
          <Tri dir="right" className="h-[11px] w-[7px]" />
        </div>
      </div>
      <MainStrip />
    </section>
  );
}

/* ---------- transport ---------- */

const cap = "text-[13px] leading-4 text-[#959595]";
const big = "text-[16px] leading-[18px] text-[#d6d6d6]";

function Transport() {
  return (
    <footer className="mt-1 shrink-0 bg-[#5e6268]">
      <div className="flex h-[52px]">
        <div className="flex flex-1 items-center bg-[#151515] pt-px pl-[90px] [clip-path:polygon(19px_0,100%_0,calc(100%-16px)_100%,30px_100%)]">
          <div className="flex w-8 flex-col items-center gap-[6px]">
            <svg width="34" height="18" viewBox="0 0 34 18" className="text-[#77797c]">
              <path d="M1 5l4 4-4 4zM29 5l4 4-4 4z" fill="#4a4c50" />
              <circle cx="17" cy="9" r="8" fill="none" stroke="currentColor" />
              <g fill="currentColor"><circle cx="12" cy="9" r="1.300" /><circle cx="22" cy="9" r="1.300" /><circle cx="13.500" cy="5.500" r="1.300" /><circle cx="20.500" cy="5.500" r="1.300" /><circle cx="17" cy="4" r="1.300" /><path d="M16 13h2v4h-2z" /></g>
            </svg>
            <span className={cap}>MIDI</span>
          </div>
          <div className="ml-[14px] flex w-[81px] flex-col items-center">
            <div className="mb-[2px] h-[6px] w-full bg-[#2d2f33]"><div className="h-full w-[5px] bg-[#4fa3cf]" /></div>
            <div className="mb-[6px] h-[7px] w-full bg-[#2d2f33]" />
            <span className={`${cap} pl-1`}>Performance</span>
          </div>
          <svg width="30" height="30" viewBox="0 0 30 30" className="ml-[21px]">
            <circle cx="15" cy="15" r="13" fill="none" stroke="#b4b4b4" strokeWidth="3.500" strokeLinecap="round" strokeDasharray="0.1 5.730" />
          </svg>
          <div className="ml-[17px] flex w-[101px] flex-col gap-1">
            <span className={big}>8:19 days</span>
            <span className={cap}>Record Max</span>
          </div>
          <div className="flex w-[167px] flex-col items-center">
            <span className="text-[24px] leading-6 font-bold text-[#cfcfcf]">00009.04.02.95</span>
            <button className={`flex items-center ${cap}`}>Bars<Tri className="h-[7px] w-[9px]" /></button>
          </div>
          <div className="flex items-center text-[#c8c8c8]">
            <button aria-label="Step back" className="ml-[25px]"><Tri dir="left" className="h-4 w-[13px]" /></button>
            <button aria-label="Rewind" className="ml-[14px] flex"><Tri dir="left" className="h-4 w-3" /><Tri dir="left" className="h-4 w-3" /></button>
            <button aria-label="Forward" className="ml-4 flex"><Tri dir="right" className="h-4 w-3" /><Tri dir="right" className="h-4 w-3" /></button>
            <button aria-label="Step forward" className="ml-[9px]"><Tri dir="right" className="h-4 w-[13px]" /></button>
            <button aria-label="Return to start" className="ml-[17px] flex"><i className="w-px bg-current" /><Tri dir="left" className="ml-px h-4 w-[14px]" /></button>
            <button aria-label="Stop" className="ml-[26px] size-[26px] bg-[#2fb2dc]" />
            <button aria-label="Play" className="ml-[22px]"><Tri dir="right" className="h-[25px] w-[22px]" /></button>
            <button aria-label="Record" className="ml-[17px] size-[25px] rounded-full bg-current" />
            <button aria-label="Loop" className="ml-5">
              <svg width="42" height="26" viewBox="0 0 42 26" fill="none" stroke="#9a9a9a" strokeWidth="3">
                <path d="M17 13l-3 11Q2 23 2 12.500T13 2h16q11 0 11 10.500T29 24h-5l3-11" />
              </svg>
            </button>
          </div>
          <div className={`ml-[21px] grid w-[134px] grid-cols-[18px_1fr] gap-y-[1px] ${big}`}>
            <span className="text-[#4d7d9c]">L</span><span>00001.01.01.00</span>
            <span className="text-[#4d7d9c]">R</span><span>00001.01.01.00</span>
          </div>
          <div className="ml-[26px] flex w-10 flex-col items-center gap-1"><span className={big}>Off</span><span className={cap}>Sync</span></div>
          <div className="ml-[14px] grid grid-cols-[20px_20px] gap-x-3 gap-y-[6px] text-[#9a9a9a]">
            <svg width="20" height="12" viewBox="0 0 20 12" fill="none" stroke="currentColor" strokeWidth="1.500"><path d="M0 2h5q3 0 5 4t6 3h4M3 5h4" /></svg>
            <Svg w={20} h={12}><path d="M1 0h1v12H1zM8 0h1v12H8zM9 3h9v6H9zM3 6h4v1H3z" /></Svg>
            <FaCog size={13} className="ml-1" />
            <Svg w={20} h={12}><path d="M5 1h1.500v10H5zM14 1h1.500v10H14zM6 4h8v5H6zM0 8h4v1H0zM16 8h4v1h-4z" /></Svg>
          </div>
          <div className="ml-[13px] flex w-[76px] flex-col items-center gap-[6px]">
            <div className="flex w-full items-center justify-between px-1 text-[#8a8c8c]">
              <Svg w={12} h={12}><circle cx="6" cy="6" r="6" /></Svg>
              <FaWrench size={13} className="-scale-x-100" />
              <Metro />
            </div>
            <span className={cap}>Metronome</span>
          </div>
          <div className="ml-[10px] flex w-[60px] flex-col items-center gap-1"><span className={big}>4 /4</span><span className={cap}>Timing</span></div>
          <div className="flex w-[52px] flex-col items-center gap-1"><span className={big}>-</span><span className={cap}>Key</span></div>
          <div className="flex w-[64px] flex-col items-center gap-1"><span className={big}>120.00</span><span className={cap}>Tempo</span></div>
          <div className="ml-[15px] flex flex-col gap-[9px]">
            <div className="flex h-[11px] flex-col gap-px"><i className="w-[84px] flex-1 bg-[#2d2f33]" /><i className="w-[84px] flex-1 bg-[#2d2f33]" /></div>
            <div className="flex items-center">
              <div className="h-[11px] w-[62px] bg-[repeating-linear-gradient(90deg,#4d9cc4_0_2px,#23465a_2px_3px)]" />
              <div className="h-[11px] w-[2px] bg-[#c8d4da]" />
              <div className="h-[11px] w-5 bg-[repeating-linear-gradient(90deg,#34363a_0_2px,#1a1a1a_2px_3px)]" />
              <Stereo className="ml-2 text-[#4fb0d8]" />
            </div>
          </div>
        </div>
        <div className="flex text-[15px] text-[#d8d8d8]">
          <div className="w-[13px] border-r border-[#4a4e54]" />
          <button className="w-[70px] pt-2">Edit</button>
          <button className="-mb-[6px] w-[70px] border-x-2 border-[#4a4e54] bg-[#3594d6] pt-[2px] text-white">Mix</button>
          <button className="w-[82px] pt-2">Browse</button>
        </div>
      </div>
      <div className="h-2 border-t border-[#6a6e73] bg-linear-to-b from-[#4a4e54] to-[#3a3d42]" />
      <div className="flex h-px bg-[#8a8a8a]"><div className="ml-[489px] w-[72px] bg-white" /></div>
    </footer>
  );
}

/* ---------- context menu ---------- */

type Item = { t: string; k?: string; off?: boolean; sub?: boolean; icon?: React.ReactNode; hot?: boolean };

const groups: Item[][] = [
  [{ t: "Expand Envelopes" }],
  [{ t: "Edit Track" }, { t: "Hide Track" }, { t: "Show in Console" }],
  [{ t: "Remove Track", k: "Shift+T" }],
  [{ t: "Duplicate Track" }, { t: "Duplicate Track (complete)" }],
  [{ t: "Group Selected Tracks", k: "Ctrl+G", off: true }, { t: "Dissolve Group", k: "Ctrl+Shift+G", off: true }],
  [{ t: "Disable Track" }, { t: "Lock Track" }, { t: "Edit Note..." }],
  [{ t: "Layers", sub: true }],
  [{ t: "Show / Hide Automation" }],
  [{ t: "Transform to Rendered Audio", hot: true }],
  [
    { t: "Add Tracks", k: "T", icon: <Plus size={17} /> },
    { t: "Add Bus for Selected Channels", icon: <Bus /> },
    { t: "Add VCA for Selected Channels", icon: <Faders /> },
    {
      t: "Pack Folder",
      icon: (
        <Svg w={25} h={15}>
          <path d="M0 0h9v2H0zM0 3h9v2H0zM0 6h9v2H0zM0 9h9v2H0zM0 12h9v2H0z" />
          <path d="M12 0h3v2h10v13H12z" opacity=".6" />
          <path d="M14 0h4v7h2l-3 4-3-4h2V2h-2z" fill="#fff" />
        </Svg>
      ),
    },
    { t: "Collapse All Tracks", icon: <Tri dir="up" className="h-[10px] w-[17px]" /> },
    {
      t: "Remove Track Automation",
      icon: (
        <svg width="22" height="22" viewBox="0 0 22 22" fill="none" stroke="currentColor" strokeWidth="1.500">
          <circle cx="11" cy="11" r="9.500" /><path d="M4 18L18 4M4 14l4-6 5 7 5-7M5 10l3-2M13 15l3 0" />
        </svg>
      ),
    },
    {
      t: "Apply Track Names to Channels",
      icon: (
        <Svg w={25} h={24}>
          <path d="M0 0h8v2H0zM0 4h8v2H0zM0 8h8v2H0zM4 14h1v5h3v1H4zM11 14h2v9h-2zM15 14h2v9h-2zM19 14h2v9h-2zM23 14h1.500v9H23z" />
          <text x="10" y="10" fontSize="7" fontWeight="bold" fontFamily="Liberation Sans, sans-serif">ABC</text>
        </Svg>
      ),
    },
  ],
];

function ContextMenu() {
  return (
    <div role="menu" className="absolute top-[338px] left-[241px] w-[387px] border border-[#45484b] bg-[#282b2d] py-px text-[15px] text-[#d6d6d6]">
      {groups.map((g, gi) => (
        <div key={gi} role="group" className={gi ? "mx-px border-t-2 border-[#404347] pt-px" : "mx-px"}>
          {g.map((it) => (
            <button
              key={it.t}
              role="menuitem"
              disabled={it.off}
              className={`flex w-full items-center text-left ${it.icon ? "h-[30px]" : "h-[28px]"} ${it.off ? "text-[#55585b]" : ""} ${it.hot ? "bg-[#3f8ec2] text-white" : ""}`}
            >
              <span className="flex w-[38px] shrink-0 items-center justify-center pr-[6px]">{it.icon}</span>
              <span className="w-[232px]">{it.t}</span>
              <span className="flex-1">{it.k}</span>
              {it.sub && <Tri dir="right" className="mr-[6px] h-[10px] w-[6px]" />}
            </button>
          ))}
        </div>
      ))}
    </div>
  );
}

const badge =
  "absolute flex size-8 items-center justify-center rounded-full border-[3px] border-white bg-[#0000f5] text-[19px] leading-none font-bold text-white shadow-[0_1px_3px_rgba(0,0,0,0.6)] [font-family:'Noto_Sans',sans-serif]";

export default function App() {
  return (
    <div className="relative flex h-screen flex-col overflow-hidden bg-black [font-family:'Liberation_Sans',Arial,sans-serif]">
      <TitleBar />
      <ToolBar />
      <div className="h-[2px] shrink-0 bg-black" />
      <Arranger />
      <Console />
      <Transport />
      <ContextMenu />
      <span className={`${badge} top-[332px] left-[183px]`}>1</span>
      <span className={`${badge} top-[753px] left-[234px]`}>2</span>
      <svg width="24" height="32" viewBox="0 0 24 32" className="absolute top-[330px] left-[219px]">
        <path d="M10 8Q7 4 11 1" stroke="#111" strokeWidth="1.500" fill="none" />
        <rect x="2" y="8" width="15" height="22" rx="7" fill="#fff" stroke="#111" strokeWidth="1.500" />
        <path d="M2 18h15M9.500 8v10" stroke="#111" />
        <rect x="8.500" y="11" width="3" height="5" rx="1.500" fill="#fff" stroke="#111" />
        <path d="M15 6l1-4M18 8l4-3M19 12l4-1" stroke="#e01818" strokeWidth="1.500" />
      </svg>
      <svg width="16" height="26" viewBox="0 0 16 26" className="absolute top-[772px] left-[511px]">
        <path d="M1 1v19l4-4 4 8 3-1-3-8h6z" fill="#fff" stroke="#111" />
      </svg>
    </div>
  );
}
